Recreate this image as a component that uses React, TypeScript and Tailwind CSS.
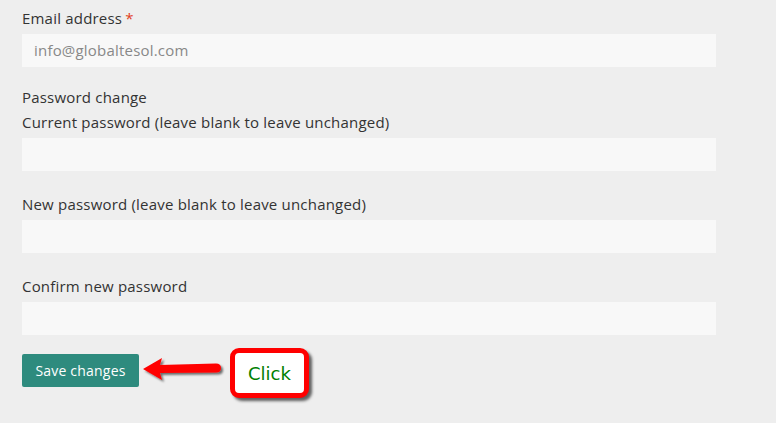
import React from 'react';

const font = { fontFamily: '"Open Sans", "Liberation Sans", sans-serif' };

function Field({ label, required, placeholder }: { label: string; required?: boolean; placeholder?: string }) {
  return (
    <div className="flex flex-col">
      <label className="text-[15px] leading-[20px] tracking-[0.2px] text-[#333]">
        {label}
        {required && <span className="ml-[3px] text-[#e2401c]">*</span>}
      </label>
      <div className="mt-[6px] h-[33px] w-[694px] bg-[#f8f8f8] flex items-center px-[12px] text-[15px] tracking-[0.2px] text-[#888]">
        {placeholder}
      </div>
    </div>
  );
}

export default function App() {
  return (
    <div className="w-[776px] h-[423px] bg-[#eeeeee] overflow-hidden" style={font}>
      <div className="pl-[22px] pt-[8px] flex flex-col">
        <Field label="Email address" required placeholder="info@globaltesol.com" />

        <div className="mt-[20px] text-[15px] leading-[20px] tracking-[0.2px] text-[#333]">Password change</div>
        <div className="mt-[5px]">
          <Field label="Current password (leave blank to leave unchanged)" />
        </div>
        <div className="mt-[23px]">
          <Field label="New password (leave blank to leave unchanged)" />
        </div>
        <div className="mt-[23px]">
          <Field label="Confirm new password" />
        </div>

        <div className="mt-[19px] flex items-start">
          <button className="h-[33px] w-[117px] rounded-[2px] bg-[#2e8b7e] text-white text-[14px] tracking-[0.2px]">
            Save changes
          </button>
          <svg width="84" height="32" viewBox="0 0 84 32" className="ml-[2px] mt-[1px]">
            <defs>
              <filter id="sh" x="-20%" y="-40%" width="140%" height="180%">
                <feDropShadow dx="2" dy="2" stdDeviation="1.2" floodColor="#000" floodOpacity="0.55" />
              </filter>
            </defs>
            <path
              d="M2 14 L21 3 L19 10 L75 8.5 Q80 8.5 80 13 Q80 17.5 75 17.5 L19 18 L21 25 Z"
              fill="#ff0000"
              filter="url(#sh)"
            />
          </svg>
          <div className="ml-[5px] -mt-[6px] w-[79px] h-[50px] rounded-[9px] border-[5px] border-[#ff0000] bg-white flex items-center justify-center shadow-[3px_3px_3px_rgba(0,0,0,0.6)]">
            <span className="text-[#008000] text-[18px]" style={{ fontFamily: '"DejaVu Sans", Verdana, sans-serif' }}>
              Click
            </span>
          </div>
        </div>
      </div>
    </div>
  );
}
